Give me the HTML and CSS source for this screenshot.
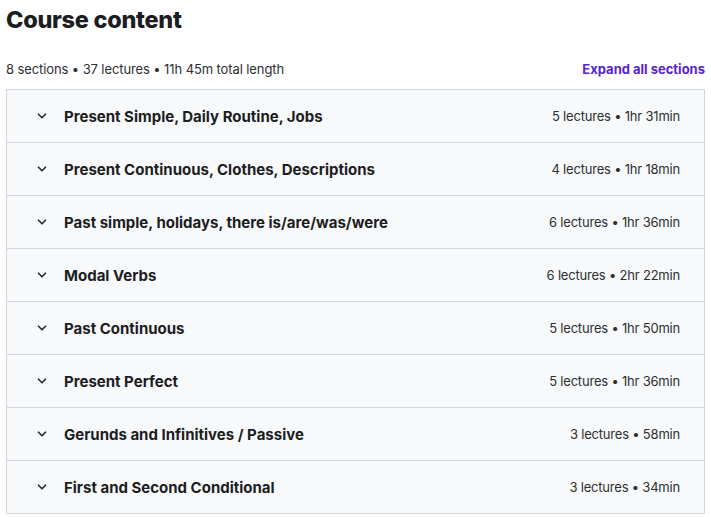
FILE: index.html
```html
<!DOCTYPE html>
<html lang="en">

<head>
  <meta charset="UTF-8" />
  <title>Course content</title>
  <link rel="stylesheet" href="styles.css">
</head>

<body>
  <h2 class="title">Course content</h2>

  <div class="summary">
    <span>8 sections • 37 lectures • 11h 45m total length</span>
    <button class="expand">Expand all sections</button>
  </div>

  <!-- sections -->
  <div class="sections">
    <div class="section">
      <svg class="chevron" viewBox="0 0 24 24"><path d="M6 9l6 6 6-6" /></svg>
      <span class="name">Present Simple, Daily Routine, Jobs</span>
      <span class="meta">5 lectures • 1hr 31min</span>
    </div>
    <div class="section">
      <svg class="chevron" viewBox="0 0 24 24"><path d="M6 9l6 6 6-6" /></svg>
      <span class="name">Present Continuous, Clothes, Descriptions</span>
      <span class="meta">4 lectures • 1hr 18min</span>
    </div>
    <div class="section">
      <svg class="chevron" viewBox="0 0 24 24"><path d="M6 9l6 6 6-6" /></svg>
      <span class="name">Past simple, holidays, there is/are/was/were</span>
      <span class="meta">6 lectures • 1hr 36min</span>
    </div>
    <div class="section">
      <svg class="chevron" viewBox="0 0 24 24"><path d="M6 9l6 6 6-6" /></svg>
      <span class="name">Modal Verbs</span>
      <span class="meta">6 lectures • 2hr 22min</span>
    </div>
    <div class="section">
      <svg class="chevron" viewBox="0 0 24 24"><path d="M6 9l6 6 6-6" /></svg>
      <span class="name">Past Continuous</span>
      <span class="meta">5 lectures • 1hr 50min</span>
    </div>
    <div class="section">
      <svg class="chevron" viewBox="0 0 24 24"><path d="M6 9l6 6 6-6" /></svg>
      <span class="name">Present Perfect</span>
      <span class="meta">5 lectures • 1hr 36min</span>
    </div>
    <div class="section">
      <svg class="chevron" viewBox="0 0 24 24"><path d="M6 9l6 6 6-6" /></svg>
      <span class="name">Gerunds and Infinitives / Passive</span>
      <span class="meta">3 lectures • 58min</span>
    </div>
    <div class="section">
      <svg class="chevron" viewBox="0 0 24 24"><path d="M6 9l6 6 6-6" /></svg>
      <span class="name">First and Second Conditional</span>
      <span class="meta">3 lectures • 34min</span>
    </div>
  </div>
</body>

</html>
```

FILE: styles.css
```css
body {
  font-family: Inter, 'Noto Sans', sans-serif;
  color: #2d2f31;
  margin: 0;
  padding: 0 6px;
}

.title {
  font-size: 23.5px;
  font-weight: 800;
  letter-spacing: -0.3px;
  margin: 0;
  padding-top: 6px;
  line-height: 28px;
  color: #1c1d1f;
}

.summary {
  display: flex;
  justify-content: space-between;
  align-items: center;
  margin-top: 25px;
  height: 20px;
  margin-bottom: 10px;
  font-size: 13px;
  letter-spacing: -0.1px;
  color: #2d2f31;
}

.expand {
  background: none;
  border: none;
  padding: 0;
  font: inherit;
  font-weight: 700;
  color: #5624d0;
  cursor: pointer;
}

.sections {
  border: 1px solid #d1d7dc;
  border-bottom: none;
}

.section {
  display: flex;
  align-items: center;
  height: 52px;
  background: #f7f9fa;
  border-bottom: 1px solid #d1d7dc;
  padding: 0 24px 0 28px;
}

.chevron {
  width: 14px;
  height: 14px;
  fill: none;
  stroke: #2d2f31;
  stroke-width: 3;
  stroke-linecap: round;
  stroke-linejoin: round;
  margin-right: 15px;
}

.name {
  flex: 1;
  font-size: 15px;
  font-weight: 700;
  color: #1c1d1f;
}

.meta {
  font-size: 13px;
  letter-spacing: -0.2px;
  color: #2d2f31;
}
```
